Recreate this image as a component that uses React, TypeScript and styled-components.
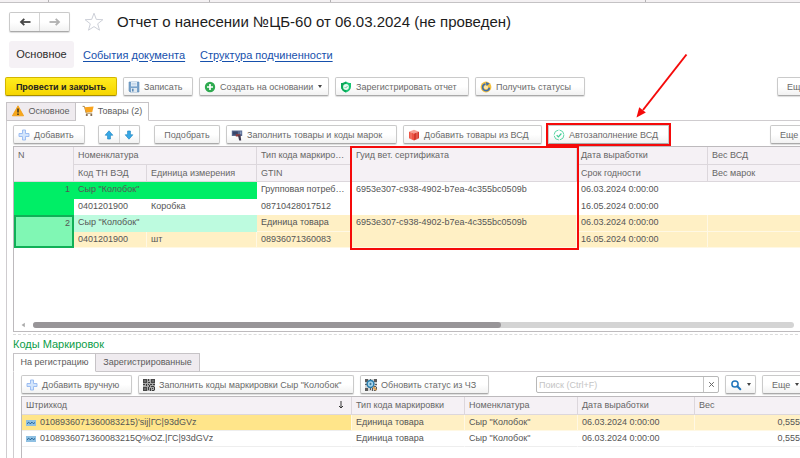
import React from 'react';
import styled, { createGlobalStyle, css } from 'styled-components';

const GlobalStyle = createGlobalStyle`
  *, *::before, *::after { box-sizing: border-box; }
  html, body { margin: 0; padding: 0; overflow: hidden; background: #fff; }
  body, button, input, table {
    font-family: "Liberation Sans", Arial, sans-serif;
    font-size: 9px;
    color: #5c5c5c;
  }
`;

/* The form is wider than the window: its right edge runs out of view. */
const Page = styled.div`
  position: relative;
  display: flex;
  flex-direction: column;
  width: calc(100% + 20px);
  height: 100vh;
`;

const WindowTabs = styled.div`
  display: flex;
  height: 3px;
  flex: none;
  background: #f4f1f3;
  border-bottom: 1px solid #c4c2c4;
`;

const WindowTab = styled.span<{ $w: number }>`
  width: ${(p) => p.$w}px;
  border-right: 1px solid #b4b2b4;
`;

const TitleBar = styled.header`
  display: flex;
  align-items: center;
  height: 20px;
  flex: none;
  margin: 9px 0 9px 9px;
`;

const raised = css`
  border: 1px solid #cacaca;
  border-bottom-color: #aaa;
  border-radius: 2px;
  background: linear-gradient(#fff 50%, #f2f2f2);
  box-shadow: 0 1px 1px #dcdcdc;
`;

const Split = styled.div<{ $w: number; $left?: number; $right?: number }>`
  ${raised}
  display: flex;
  width: ${(p) => p.$w}px;
  height: 100%;
  margin-left: ${(p) => p.$left ?? 0}px;
  margin-right: ${(p) => p.$right ?? 0}px;
`;

const SplitButton = styled.button`
  display: flex;
  flex: 1;
  align-items: center;
  justify-content: center;
  padding: 0;
  border: 0;
  background: none;
  & + & { border-left: 1px solid #d4d4d4; }
`;

const StarButton = styled.button`
  display: flex;
  margin: 0 13px 0 14px;
  padding: 0;
  border: 0;
  background: none;
`;

const Title = styled.h1`
  margin: 0;
  font-size: 15px;
  line-height: 20px;
  font-weight: 400;
  color: #1c1c1c;
  white-space: nowrap;
`;

const Sections = styled.nav`
  display: flex;
  align-items: center;
  gap: 15px;
  height: 27px;
  flex: none;
  margin: 0 0 9px 9px;
  font-size: 11px;
`;

const CurrentSection = styled.span`
  width: 65px;
  margin-right: -6px;
  line-height: 27px;
  text-align: center;
  border-radius: 3px;
  background: #f5f1f5;
  color: #2c2c2c;
`;

const SectionLink = styled.a`
  color: #1650ac;
  text-decoration: underline;
  text-underline-offset: 2px;
  white-space: nowrap;
`;

const Toolbar = styled.div<{ $left?: number }>`
  display: flex;
  gap: 6px;
  height: 19px;
  flex: none;
  margin-left: ${(p) => p.$left ?? 0}px;
`;

const Spacer = styled.span`
  flex: 1;
`;

const Button = styled.button<{
  $w: number;
  $primary?: boolean;
  $marked?: boolean;
  $center?: boolean;
  $indent?: boolean;
}>`
  ${raised}
  display: flex;
  flex: none;
  align-items: center;
  justify-content: ${(p) => (p.$center ? 'center' : 'flex-start')};
  gap: 4px;
  min-width: ${(p) => p.$w}px;
  height: 19px;
  padding: 0 4px 0 ${(p) => (p.$indent ? 9 : 4)}px;
  white-space: nowrap;
  color: #6a6a6a;
  ${(p) =>
    p.$primary &&
    css`
      border-color: #d3b500;
      border-bottom-color: #a68e00;
      background: linear-gradient(#ffec1f, #f6d500);
      color: #222;
      font-weight: 700;
    `}
  ${(p) =>
    p.$marked &&
    css`
      border-radius: 0;
      outline: 2px solid #f50a0a;
      margin-right: 2px;
    `}
  svg { flex: none; }
`;

const Caret = styled.span`
  width: 0;
  border: 2px solid transparent;
  border-top: 3px solid #444;
  border-bottom: 0;
  margin-left: 1px;
`;

const TabList = styled.div<{ $top: number }>`
  display: flex;
  height: 19px;
  flex: none;
  margin: ${(p) => p.$top}px 0 -1px 0;
`;

const Tab = styled.button<{ $w: number; $active?: boolean }>`
  position: relative;
  display: flex;
  align-items: center;
  justify-content: center;
  gap: 4px;
  width: ${(p) => p.$w}px;
  padding: 0 0 2px;
  border: 1px solid #c6c3c6;
  border-bottom-color: ${(p) => (p.$active ? '#fff' : '#c9c6c9')};
  background: ${(p) => (p.$active ? '#fff' : '#efebef')};
  white-space: nowrap;
  & + & { border-left-width: 0; }
`;

const Panel = styled.section<{ $top: number; $side: number }>`
  display: flex;
  flex: 1;
  min-height: 0;
  flex-direction: column;
  border: 1px solid #cfcccf;
  border-bottom: 0;
  padding: ${(p) => p.$top}px ${(p) => p.$side}px 0;
`;

const Body = styled.main`
  display: flex;
  flex: 1;
  min-height: 0;
  flex-direction: column;
  padding: 0 0 0 6px;
`;

const GridBox = styled.div<{ $fill?: boolean }>`
  position: relative;
  display: flex;
  flex-direction: column;
  margin-top: 2px;
  border: 1px solid #bdbabd;
  ${(p) => (p.$fill ? 'flex: 1; min-height: 0; border-bottom: 0; overflow: hidden;' : 'min-height: 186px; flex: none;')}
`;

const Grid = styled.table`
  width: 100%;
  table-layout: fixed;
  border-collapse: separate;
  border-spacing: 0;
`;

const Th = styled.th<{ $h?: number }>`
  height: ${(p) => p.$h ?? 18}px;
  padding: 0 3px 0 4px;
  border-right: 1px solid #dcd7dc;
  border-bottom: 1px solid #dcd7dc;
  background: #f5f1f5;
  color: #666;
  font-weight: 400;
  line-height: 16px;
  text-align: left;
  vertical-align: top;
  white-space: nowrap;
`;

const HeadSplit = styled.span`
  display: flex;
  justify-content: space-between;
  color: inherit;
  svg { margin: 3px 4px 0 0; }
`;

type Tone = 'plain' | 'green' | 'mint' | 'paleMint' | 'row' | 'rowFocus';
const tones: Record<Tone, string> = {
  plain: '#fff',
  green: '#00ee66',
  mint: '#80f7b4',
  paleMint: '#bdfbdf',
  row: '#fff0c5',
  rowFocus: '#ffe58a',
};

const Td = styled.td<{ $tone?: Tone; $h?: number; $right?: boolean; $focus?: boolean; $lined?: boolean }>`
  height: ${(p) => p.$h ?? 16}px;
  padding: 0 3px 0 4px;
  background: ${(p) => tones[p.$tone ?? 'plain']};
  border-right: 1px solid ${(p) => (p.$tone === 'row' || p.$tone === 'rowFocus' ? '#fff8e4' : 'transparent')};
  border-bottom: 1px solid ${(p) => (p.$tone === 'row' ? '#fff8e4' : p.$lined ? '#eee' : 'transparent')};
  line-height: 15px;
  text-align: ${(p) => (p.$right ? 'right' : 'left')};
  vertical-align: top;
  white-space: nowrap;
  color: #555;
  ${(p) => p.$focus && 'box-shadow: inset 0 0 0 1px #10b057; border: 1px solid #10b057;'}
  svg { vertical-align: middle; margin-right: 4px; }
`;

/* Red frame laid over the certificate column. */
const ColumnMark = styled.div`
  position: absolute;
  top: -1px;
  left: 336px;
  width: 229px;
  height: 104px;
  border: 2px solid #f50a0a;
  pointer-events: none;
`;

const PointerArrow = styled.svg`
  position: absolute;
  left: 632px;
  top: 50px;
  pointer-events: none;
`;

const ScrollRow = styled.div`
  display: flex;
  align-items: center;
  gap: 8px;
  height: 6px;
  margin: auto 18px 3px 7px;
`;

const Track = styled.div`
  flex: 1;
  height: 6px;
  border-radius: 3px;
  background: #d4d4d4;
`;

const Thumb = styled.div`
  width: 61.5%;
  height: 6px;
  border-radius: 3px;
  background: #989598;
`;

const Divider = styled.div`
  height: 1px;
  flex: none;
  margin-top: 2px;
  border-top: 1px dashed #dcdcdc;
`;

const GroupTitle = styled.h2`
  margin: 2px 0 0;
  font-size: 11px;
  line-height: 15px;
  font-weight: 400;
  color: #0c9c48;
`;

const SearchField = styled.div`
  display: flex;
  width: 183px;
  height: 17px;
  margin-top: 1px;
  border: 1px solid #b8b8b8;
  border-radius: 2px;
`;

const SearchInput = styled.input`
  flex: 1;
  min-width: 0;
  padding: 0 2px;
  border: 0;
  outline: 0;
  background: transparent;
  &::placeholder { color: #c4c4c4; opacity: 1; }
`;

const ClearButton = styled.button`
  display: flex;
  align-items: center;
  justify-content: center;
  width: 15px;
  padding: 0;
  border: 0;
  border-left: 1px solid #c4c4c4;
  background: none;
`;

const Icon = ({ children, w = 12, h = 12 }: { children: React.ReactNode; w?: number; h?: number }) => (
  <svg width={w} height={h} viewBox={`0 0 ${w} ${h}`} aria-hidden="true">
    {children}
  </svg>
);

const NavArrow = ({ back }: { back?: boolean }) => (
  <Icon>
    <path
      d={back ? 'M11.500 6H2.500' : 'M.5 6h9'}
      stroke={back ? '#444' : '#b0b0b0'}
      strokeWidth="1.800"
    />
    <path
      d={back ? 'M5.300 2.800L2 6l3.300 3.200' : 'M6.700 2.800L10 6 6.700 9.200'}
      fill="none"
      stroke={back ? '#444' : '#b0b0b0'}
      strokeWidth="1.800"
    />
  </Icon>
);

const Star = () => (
  <Icon w={20} h={20}>
    <path
      d="M10 1.200l2.300 6.200 6.600.3-5.200 4.100 1.800 6.400L10 14.600l-5.500 3.600 1.800-6.400L1.100 7.700l6.600-.3z"
      fill="#fff"
      stroke="#cdd0d8"
      strokeWidth="1"
    />
  </Icon>
);

const Floppy = () => (
  <Icon>
    <path d="M1 1h10v10H2L1 10z" fill="#7aa3cb" stroke="#5c8ab6" strokeWidth=".6" />
    <rect x="3" y="1" width="6" height="4.400" fill="#e6f0f8" />
    <path d="M3.600 2.400h4.800M3.600 3.800h4.800" stroke="#a9c3dc" strokeWidth=".6" />
    <rect x="3" y="7" width="6" height="4" fill="#dfe8f0" />
    <rect x="4" y="7.700" width="1.600" height="2.800" fill="#5c8ab6" />
  </Icon>
);

const GreenPlus = () => (
  <Icon>
    <circle cx="6" cy="6" r="5.200" fill="#2faa50" />
    <path d="M6 3v6M3 6h6" stroke="#fff" strokeWidth="1.700" />
  </Icon>
);

const Shield = () => (
  <Icon>
    <path d="M6 .5C7.600 1.600 9.200 2 11 2v3.800c0 2.700-2 4.500-5 5.800-3-1.300-5-3.100-5-5.800V2c1.800 0 3.400-.4 5-1.500z" fill="#17c472" />
    <path d="M6 .5C4.400 1.600 2.800 2 1 2v3.800c0 2.700 2 4.500 5 5.800z" fill="#0aa858" />
    <circle cx="6" cy="6" r="2.900" fill="#e9faf2" />
    <path d="M4.600 6l1.100 1.100L7.500 5" fill="none" stroke="#5ccf9a" strokeWidth=".9" />
  </Icon>
);

const Sync = () => (
  <Icon>
    <circle cx="6" cy="6" r="5.400" fill="#f4c141" />
    <circle cx="6" cy="6.200" r="2" fill="#fbe6ae" />
    <path d="M9.400 6.600A3.400 3.400 0 1 1 5.400 2.900" fill="none" stroke="#3a6cae" strokeWidth="1.500" />
    <path d="M5.800.9l3.800 1.500L6.600 5z" fill="#3a6cae" />
  </Icon>
);

const Warning = () => (
  <Icon>
    <path d="M6 .8L11.600 10.800H.4z" fill="#f7a81b" stroke="#f09a10" strokeWidth=".8" strokeLinejoin="round" />
    <path d="M6 3.600v3.900M6 8.400v1.500" stroke="#33302a" strokeWidth="1.500" />
  </Icon>
);

const Cart = () => (
  <Icon>
    <path d="M.6 1.400h1.800l1.800 6.800h6" fill="none" stroke="#9a7a45" strokeWidth=".9" />
    <path d="M2.500 2.200L11.600 1.400 10.300 7 4 7.400z" fill="#f9a41c" />
    <circle cx="4.800" cy="10" r="1.100" fill="#7e6142" />
    <circle cx="9.300" cy="10" r="1.100" fill="#7e6142" />
  </Icon>
);

const BluePlus = () => (
  <Icon>
    <path d="M4.500 1h3v3.500H11v3H7.500V11h-3V7.500H1v-3h3.500z" fill="#d3e5fc" stroke="#94b8f0" strokeWidth=".9" strokeLinejoin="round" />
  </Icon>
);

const MoveArrow = ({ down }: { down?: boolean }) => (
  <Icon>
    <path
      d={down ? 'M4.600 2h2.800v3.800h2.400L6 10.200 2.200 5.800h2.400z' : 'M4.600 10h2.800V6.200h2.400L6 1.800 2.200 6.200h2.400z'}
      fill="#38a8e6"
      stroke="#2088c4"
      strokeWidth=".7"
      strokeLinejoin="round"
    />
  </Icon>
);

const Scanner = () => (
  <Icon>
    <path d="M.8 1.500h10.400v5.500H.8z" fill="#5a6c92" />
    <path d="M1.800 2.500h5v3.200h-5z" fill="#38466a" />
    <path d="M4.800 5.200h4.400v2.300H4.800z" fill="#8c3a3c" />
    <path d="M7 6.500h2.600l.6 5H8.200z" fill="#403a50" />
    <path d="M9 2.500h1.400v2.500H9z" fill="#8498bc" />
  </Icon>
);

const RedBox = () => (
  <Icon>
    <path d="M6 .8l5 1.900L6 4.500 1 2.700z" fill="#f8a094" />
    <path d="M1 2.700l5 1.800v7L1 9.300z" fill="#ee5444" />
    <path d="M11 2.700L6 4.500v7l5-2.200z" fill="#d4382c" />
    <path d="M3 3.600v6.600M9 3.600v6.600" stroke="#f6a79c" strokeWidth=".6" />
  </Icon>
);

const RoundCheck = () => (
  <Icon>
    <circle cx="6" cy="6" r="4.900" fill="none" stroke="#5ad6a4" strokeWidth="1" strokeDasharray="6.500 1.200" />
    <path d="M3.700 6.100l1.700 1.700 3-3.300" fill="none" stroke="#3ccc92" strokeWidth="1.200" />
  </Icon>
);

const codeCells =
  'M5 0h1v2H5zM5 3h2v1H5zM0 5h2v1H0zM3 5h1v2H3zM5 5h1v1H5zM7 5h2v1H7zM10 5h2v1h-2zM6 6h1v2H6zM8 7h3v1H8zM5 8h1v3H5zM7 9h1v3H7zM9 9h1v1H9zM11 8h1v3h-1zM9 11h2v1H9z';

const Matrix = () => (
  <Icon>
    <rect width="12" height="12" fill="#a8a8a8" />
    <path d={codeCells} fill="#3c3c3c" />
    <path d="M0 0h4v4H0zM8 0h4v4H8zM0 8h4v4H0z" fill="#484848" />
    <path d="M1.500 1.500h1v1h-1zM9.500 1.500h1v1h-1zM1.500 9.500h1v1h-1z" fill="#ddd" />
  </Icon>
);

const MatrixSearch = () => (
  <Icon>
    <rect width="12" height="12" fill="#d4d4d4" />
    <path d={codeCells} fill="#5c5c5c" />
    <path d="M0 0h3v3H0zM9 0h3v3H9zM0 9h3v3H0z" fill="#5c5c5c" />
    <circle cx="5.500" cy="5" r="3.400" fill="#a8d6ec" stroke="#2a7eae" strokeWidth="1.500" />
    <path d="M4.300 5h2.400M5.500 3.800v2.400" stroke="#3c718f" strokeWidth=".9" />
    <path d="M8.200 7.800l3 3.300" stroke="#e0a050" strokeWidth="1.900" />
  </Icon>
);

const Magnifier = () => (
  <Icon>
    <circle cx="5" cy="5" r="3.100" fill="#fff" stroke="#2276bc" strokeWidth="1.500" />
    <path d="M7.300 7.300l3 3" stroke="#2276bc" strokeWidth="2" strokeLinecap="round" />
  </Icon>
);

const CodeRecord = () => (
  <Icon w={10} h={6}>
    <rect width="10" height="6" fill="#8fc0e2" />
    <path d="M1 3.800l1.700-1.600 1.500 1.600L6 2.200l1.300 1.400L9 2.600" fill="none" stroke="#1d5f94" strokeWidth="1" />
  </Icon>
);

const SortArrow = () => (
  <Icon w={6} h={9}>
    <path d="M3 1v7M1 6l2 2 2-2" fill="none" stroke="#333" strokeWidth="1" />
  </Icon>
);

const Cross = () => (
  <Icon w={7} h={7}>
    <path d="M1.200 1.200l4.600 4.600M5.800 1.200L1.200 5.800" stroke="#666" strokeWidth="1" />
  </Icon>
);

const ScrollLeft = () => (
  <Icon w={4} h={6}>
    <path d="M3.800.8v4.400L.6 3z" fill="#aaa" />
  </Icon>
);

const guid = '6953e307-c938-4902-b7ea-4c355bc0509b';

const goods = [
  { n: 1, unit: 'Коробка', kind: 'Групповая потреб…', gtin: '08710428017512', selected: false },
  { n: 2, unit: 'шт', kind: 'Единица товара', gtin: '08936071360083', selected: true },
];

const codes = [
  { code: "0108936071360083215)'sij|ГС|93dGVz", selected: true },
  { code: '0108936071360083215Q%OZ.|ГС|93dGVz', selected: false },
];

const More = () => (
  <Button $w={43} $indent>
    Еще <Caret />
  </Button>
);

const GoodsTable = () => (
  <Grid>
    <colgroup>
      {[60, 73, 110, 95, 225, 131].map((w, i) => (
        <col key={i} style={{ width: w }} />
      ))}
      <col />
    </colgroup>
    <thead>
      <tr>
        <Th rowSpan={2}>N</Th>
        <Th colSpan={2}>Номенклатура</Th>
        <Th>Тип кода маркиро…</Th>
        <Th rowSpan={2}>Гуид вет. сертификата</Th>
        <Th>Дата выработки</Th>
        <Th>Вес ВСД</Th>
      </tr>
      <tr>
        <Th $h={17}>Код ТН ВЭД</Th>
        <Th $h={17}>Единица измерения</Th>
        <Th $h={17}>GTIN</Th>
        <Th $h={17}>Срок годности</Th>
        <Th $h={17}>Вес марок</Th>
      </tr>
    </thead>
    <tbody>
      {goods.map((g) => {
        const tone: Tone = g.selected ? 'row' : 'plain';
        return (
          <React.Fragment key={g.n}>
            <tr>
              <Td rowSpan={2} $right $tone={g.selected ? 'mint' : 'green'} $focus={g.selected}>
                {g.n}
              </Td>
              <Td colSpan={2} $h={17} $tone={g.selected ? 'paleMint' : 'green'}>
                Сыр "Колобок"
              </Td>
              <Td $tone={tone}>{g.kind}</Td>
              <Td rowSpan={2} $tone={tone}>{guid}</Td>
              <Td $tone={tone}>06.03.2024 0:00:00</Td>
              <Td $tone={tone} />
            </tr>
            <tr>
              <Td $tone={tone}>0401201900</Td>
              <Td $tone={tone}>{g.unit}</Td>
              <Td $tone={tone}>{g.gtin}</Td>
              <Td $tone={tone}>16.05.2024 0:00:00</Td>
              <Td $tone={tone} />
            </tr>
          </React.Fragment>
        );
      })}
    </tbody>
  </Grid>
);

const CodesTable = () => (
  <Grid>
    <colgroup>
      {[330, 113, 113, 117].map((w, i) => (
        <col key={i} style={{ width: w }} />
      ))}
      <col />
    </colgroup>
    <thead>
      <tr>
        <Th>
          <HeadSplit>
            Штрихкод <SortArrow />
          </HeadSplit>
        </Th>
        <Th>Тип кода маркировки</Th>
        <Th>Номенклатура</Th>
        <Th>Дата выработки</Th>
        <Th>Вес</Th>
      </tr>
    </thead>
    <tbody>
      {codes.map((c) => {
        const tone: Tone = c.selected ? 'row' : 'plain';
        return (
          <tr key={c.code}>
            <Td $lined $tone={c.selected ? 'rowFocus' : 'plain'}>
              <CodeRecord />
              {c.code}
            </Td>
            <Td $lined $tone={tone}>Единица товара</Td>
            <Td $lined $tone={tone}>Сыр "Колобок"</Td>
            <Td $lined $tone={tone}>06.03.2024 0:00:00</Td>
            <Td $lined $right $tone={tone}>0,555</Td>
          </tr>
        );
      })}
    </tbody>
  </Grid>
);

export default function App() {
  return (
    <>
      <GlobalStyle />
      <Page>
        <WindowTabs>
          <WindowTab $w={49} />
          <WindowTab $w={161} />
          <WindowTab $w={121} />
          <WindowTab $w={315} />
        </WindowTabs>

        <TitleBar>
          <Split $w={61}>
            <SplitButton aria-label="Назад">
              <NavArrow back />
            </SplitButton>
            <SplitButton aria-label="Вперед">
              <NavArrow />
            </SplitButton>
          </Split>
          <StarButton aria-label="Избранное">
            <Star />
          </StarButton>
          <Title>Отчет о нанесении №ЦБ-60 от 06.03.2024 (не проведен)</Title>
        </TitleBar>

        <Sections>
          <CurrentSection>Основное</CurrentSection>
          <SectionLink href="#events">События документа</SectionLink>
          <SectionLink href="#structure">Структура подчиненности</SectionLink>
        </Sections>

        <Toolbar $left={5}>
          <Button $w={112} $primary $center>Провести и закрыть</Button>
          <Button $w={70}><Floppy />Записать</Button>
          <Button $w={130}><GreenPlus />Создать на основании <Caret /></Button>
          <Button $w={134}><Shield />Зарегистрировать отчет</Button>
          <Button $w={110}><Sync />Получить статусы</Button>
          <Spacer />
          <More />
        </Toolbar>

        <Body>
          <TabList $top={6} role="tablist">
            <Tab role="tab" aria-selected={false} $w={70}><Warning />Основное</Tab>
            <Tab role="tab" aria-selected $active $w={73}><Cart />Товары (2)</Tab>
          </TabList>
          <Panel $top={4} $side={6}>
            <Toolbar>
              <Button $w={72}><BluePlus />Добавить</Button>
              <Split $w={42} $left={7} $right={8}>
                <SplitButton aria-label="Переместить вверх"><MoveArrow /></SplitButton>
                <SplitButton aria-label="Переместить вниз"><MoveArrow down /></SplitButton>
              </Split>
              <Button $w={66} $center>Подобрать</Button>
              <Button $w={171}><Scanner />Заполнить товары и коды марок</Button>
              <Button $w={139}><RedBox />Добавить товары из ВСД</Button>
              <Button $w={121} $marked><RoundCheck />Автозаполнение ВСД</Button>
              <Spacer />
              <More />
            </Toolbar>

            <GridBox>
              <GoodsTable />
              <ScrollRow>
                <ScrollLeft />
                <Track>
                  <Thumb />
                </Track>
              </ScrollRow>
              <ColumnMark />
            </GridBox>

            <Divider />
            <GroupTitle>Коды Маркировок</GroupTitle>
            <TabList $top={1} role="tablist">
              <Tab role="tab" aria-selected $active $w={83}>На регистрацию</Tab>
              <Tab role="tab" aria-selected={false} $w={104}>Зарегистрированные</Tab>
            </TabList>
            <Panel $top={3} $side={7}>
              <Toolbar>
                <Button $w={111}><BluePlus />Добавить вручную</Button>
                <Button $w={216}><Matrix />Заполнить коды маркировки Сыр "Колобок"</Button>
                <Button $w={129}><MatrixSearch />Обновить статус из ЧЗ</Button>
                <Spacer />
                <SearchField>
                  <SearchInput aria-label="Поиск" placeholder="Поиск (Ctrl+F)" />
                  <ClearButton aria-label="Очистить"><Cross /></ClearButton>
                </SearchField>
                <Button $w={30} $center aria-label="Найти"><Magnifier /><Caret /></Button>
                <More />
              </Toolbar>
              <GridBox $fill>
                <CodesTable />
              </GridBox>
            </Panel>
          </Panel>
        </Body>

        <PointerArrow width="60" height="72" viewBox="0 0 60 72" aria-hidden="true">
          <path d="M54.500 4.500L11 60" stroke="#f50a0a" strokeWidth="2" />
          <path d="M4.500 67.500L7.200 57.200 13.800 62.400z" fill="#f50a0a" />
        </PointerArrow>
      </Page>
    </>
  );
}
